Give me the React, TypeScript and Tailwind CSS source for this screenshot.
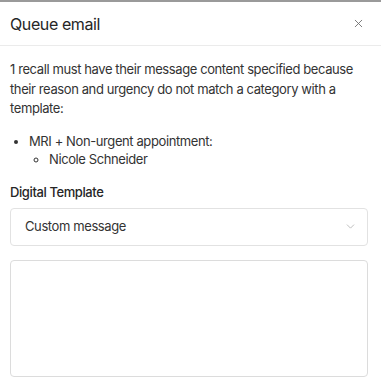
import { X, ChevronDown } from 'lucide-react'

export default function App() {
  return (
    <div
      className="h-[388px] w-[381px] overflow-hidden bg-white tracking-[-0.025em] text-[#2b2b2b]"
      style={{ fontFamily: 'Inter, "Noto Sans", sans-serif' }}
    >
      <div className="h-[2px] bg-[#9a9a9a]" />
      <div className="flex h-[44px] items-center justify-between border-b border-[#ebebeb] pl-[10px] pr-[16px]">
        <h2 className="text-[16px] font-normal text-[#262626]">Queue email</h2>
        <button className="text-[#6b6b6b]">
          <X className="size-[13px]" strokeWidth={1.6} />
        </button>
      </div>
      <div className="pl-[10px] pr-[13px] pt-[14px]">
        <p className="text-[13px] leading-[19.5px] text-[#333333]">
          1 recall must have their message content specified because their reason and urgency do not match a
          category with a template:
        </p>
        <ul className="mt-[13px] list-disc pl-[19px] text-[13px] leading-[18px] text-[#333333]">
          <li>
            MRI + Non-urgent appointment:
            <ul className="list-[circle] pl-[20px]">
              <li>Nicole Schneider</li>
            </ul>
          </li>
        </ul>
        <p className="mt-[15px] text-[13px] font-medium leading-[18px] text-[#262626]">Digital Template</p>
        <button className="mt-[7px] flex h-[38px] w-full items-center justify-between rounded-[4px] border border-[#e2e2e2] pl-[14px] pr-[10px] text-[13px] text-[#333333]">
          <span>Custom message</span>
          <ChevronDown className="size-[13px] text-[#b5b5b5]" strokeWidth={1.6} />
        </button>
        <textarea className="mt-[14px] block h-[117px] w-full resize-none rounded-[4px] border border-[#dcdcdc] outline-none" />
      </div>
    </div>
  )
}
